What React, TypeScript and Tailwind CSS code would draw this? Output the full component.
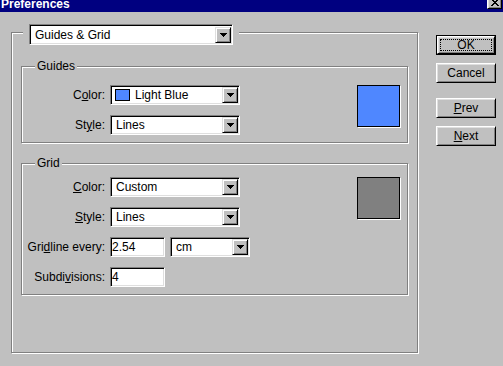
import type { ReactNode } from "react"

const sunken =
  "border border-t-[#808080] border-l-[#808080] border-b-white border-r-white bg-white shadow-[inset_1px_1px_0_#000,inset_-1px_-1px_0_#dfdfdf]"
const raised =
  "border border-t-white border-l-white border-b-black border-r-black bg-[#c0c0c0] shadow-[inset_1px_1px_0_#dfdfdf,inset_-1px_-1px_0_#808080]"
const etched = "border border-[#808080] shadow-[1px_1px_0_#fff,inset_1px_1px_0_#fff]"

function Arrow() {
  return (
    <div
      className={`w-[16px] h-[16px] shrink-0 flex items-center justify-center border border-t-[#dfdfdf] border-l-[#dfdfdf] border-b-black border-r-black bg-[#c0c0c0] shadow-[inset_1px_1px_0_#fff,inset_-1px_-1px_0_#808080]`}
    >
      <svg width="7" height="4" viewBox="0 0 7 4" shapeRendering="crispEdges">
        <polygon points="0,0 7,0 3.5,4" fill="#000" />
      </svg>
    </div>
  )
}

function Select({ width, children }: { width: string; children: ReactNode }) {
  return (
    <div className={`${width} h-[20px] p-[1px] flex items-center ${sunken}`}>
      <div className="flex-1 flex items-center pl-[4px] leading-none whitespace-nowrap">{children}</div>
      <Arrow />
    </div>
  )
}

function Field({ value }: { value: string }) {
  return (
    <div className={`w-[55px] h-[20px] flex items-center pl-[1px] leading-none ${sunken}`}>{value}</div>
  )
}

function Row({ label, children }: { label: ReactNode; children: ReactNode }) {
  return (
    <div className="flex items-center h-[20px]">
      <div className="w-[84px] text-right pr-[1px] whitespace-nowrap">{label}</div>
      <div className="ml-[4px] flex items-center">{children}</div>
    </div>
  )
}

function Group({ title, height, pt, children }: { title: string; height: string; pt: string; children: ReactNode }) {
  return (
    <div className={`relative w-[387px] ${height} ${pt} ${etched} flex`}>
      <span className="absolute left-[13px] top-[-9px] px-[2px] bg-[#c0c0c0] leading-[16px]">{title}</span>
      {children}
    </div>
  )
}

function Button({ children, def }: { children: ReactNode; def?: boolean }) {
  if (def) {
    return (
      <div className="w-[60px] h-[20px] border border-black">
        <div className={`h-full ${raised} p-[2px]`}>
          <div className="h-full border border-dotted border-black flex items-center justify-center leading-none">
            {children}
          </div>
        </div>
      </div>
    )
  }
  return (
    <div className={`w-[60px] h-[20px] ${raised} flex items-center justify-center leading-none`}>{children}</div>
  )
}

const U = ({ children }: { children: ReactNode }) => (
  <span className="underline underline-offset-[1px]">{children}</span>
)

export default function App() {
  return (
    <div className="w-[503px] h-[366px] bg-[#c0c0c0] overflow-hidden text-black text-[12px] font-['Liberation_Sans',Arial,sans-serif]">
      {/* title bar, top edge cut off */}
      <div className="h-[12px] bg-[#000080] flex justify-between items-start overflow-hidden">
        <span className="pl-[1px] -mt-[3px] text-white font-bold text-[12px] leading-[14px]">Preferences</span>
        <div className={`w-[15px] h-[14px] -mt-[5px] mr-[1px] ${raised} flex items-end justify-center pb-[2px]`}>
          <svg width="8" height="7" viewBox="0 0 8 7" shapeRendering="crispEdges">
            <path d="M0 0h2l2 2.5L6 0h2L5 3.5 8 7H6L4 4.5 2 7H0l3-3.5z" fill="#000" />
          </svg>
        </div>
      </div>

      <div className="flex">
        <div className="pl-[11px] pt-[20px]">
          <div className={`relative w-[407px] h-[321px] ${etched} pl-[9px] pt-[33px]`}>
            <div className="absolute left-[11px] top-[-9px] px-[6px] bg-[#c0c0c0]">
              <Select width="w-[204px] h-[21px]">Guides &amp; Grid</Select>
            </div>

            <Group title="Guides" height="h-[77px]" pt="pt-[18px]">
              <div className="flex flex-col gap-[10px]">
                <Row label={<>C<U>o</U>lor:</>}>
                  <Select width="w-[130px]">
                    <span className="w-[15px] h-[12px] border border-black bg-[#4f87ff] mr-[5px] -ml-[1px]" />
                    Light Blue
                  </Select>
                </Row>
                <Row label={<>St<U>y</U>le:</>}>
                  <Select width="w-[130px]">Lines</Select>
                </Row>
              </div>
              <div className="ml-auto mr-[7px] w-[43px] h-[42px] border border-black bg-[#4f87ff] shadow-[1px_1px_0_#fff]" />
            </Group>

            <div className="mt-[20px]">
              <Group title="Grid" height="h-[132px]" pt="pt-[13px]">
                <div className="flex flex-col gap-[10px]">
                  <Row label={<><U>C</U>olor:</>}>
                    <Select width="w-[130px]">Custom</Select>
                  </Row>
                  <Row label={<><U>S</U>tyle:</>}>
                    <Select width="w-[130px]">Lines</Select>
                  </Row>
                  <Row label={<>Gri<U>d</U>line every:</>}>
                    <Field value="2.54" />
                    <div className="ml-[5px]">
                      <Select width="w-[80px]">cm</Select>
                    </div>
                  </Row>
                  <Row label={<>Subdi<U>v</U>isions:</>}>
                    <Field value="4" />
                  </Row>
                </div>
                <div className="ml-auto mr-[7px] w-[43px] h-[42px] border border-black bg-[#808080] shadow-[1px_1px_0_#fff]" />
              </Group>
            </div>
          </div>
        </div>

        <div className="ml-[18px] pt-[23px] flex flex-col gap-[8px]">
          <Button def>OK</Button>
          <Button>Cancel</Button>
          <div className="mt-[7px]">
            <Button>
              <U>P</U>rev
            </Button>
          </div>
          <Button>
            <U>N</U>ext
          </Button>
        </div>
      </div>
    </div>
  )
}
